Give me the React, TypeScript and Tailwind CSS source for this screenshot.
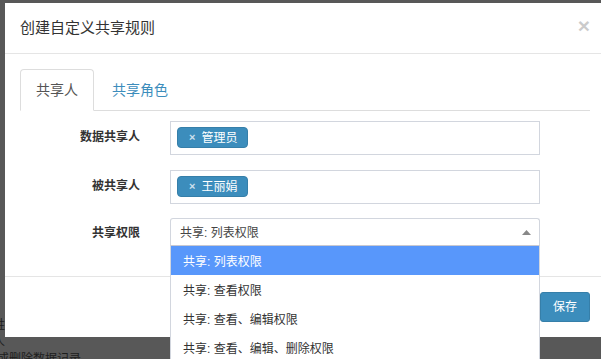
import { useState } from 'react';

const options = ['共享: 列表权限', '共享: 查看权限', '共享: 查看、编辑权限', '共享: 查看、编辑、删除权限'];

function Tag({ label }: { label: string }) {
  return (
    <div className="flex items-center h-[21px] pl-[11px] pr-[10px] bg-[#3c8dbc] border border-[#367fa9] rounded-[4px] text-white text-[12px] leading-[19px]">
      <span className="text-white/75 font-bold text-[11px] mr-[6px]">×</span>
      <span className="pt-px">{label}</span>
    </div>
  );
}

export default function App() {
  const [tab, setTab] = useState(0);
  const [selected, setSelected] = useState(0);

  return (
    <div
      className="relative w-[601px] h-[359px] overflow-hidden bg-[#585858] flex flex-col justify-end"
      style={{ fontFamily: '"Liberation Sans", "Noto Sans CJK SC", sans-serif' }}
    >
      {/* page behind the backdrop */}
      <div className="mb-[-9px] text-[12px] leading-[17px] text-[#1e1e1e]">
        <div className="ml-[-7px]">姓名</div>
        <div className="ml-[-7px]">人</div>
        <div className="ml-[-3px]">或删除数据记录</div>
      </div>

      {/* Modal */}
      <div className="absolute left-[5px] top-[3px] w-[600px] bg-white">
        {/* Header */}
        <div className="flex items-center justify-between px-[15px] py-[15px] border-b border-[#e5e5e5]">
          <h4 className="text-[15px] leading-[20px] text-[#333]">创建自定义共享规则</h4>
          <button className="text-[21px] leading-[20px] font-bold text-black opacity-20 mt-[-4px]">×</button>
        </div>

        {/* Body */}
        <div className="px-[15px] pt-[15px] pb-[30px]">
          <div className="flex border-b border-[#ddd]">
            {['共享人', '共享角色'].map((t, i) => (
              <button
                key={t}
                onClick={() => setTab(i)}
                className={
                  tab === i
                    ? 'mb-[-1px] mr-[2px] px-[15px] py-[10px] text-[14px] leading-[20px] text-[#555] bg-white border border-[#ddd] border-b-white rounded-t-[4px]'
                    : 'mb-[-1px] mr-[2px] px-[15px] py-[10px] text-[14px] leading-[20px] text-[#3c8dbc] border border-transparent'
                }
              >
                {t}
              </button>
            ))}
          </div>

          <div className="pt-[10px]">
            <div className="flex">
              <label className="w-[135px] pr-[15px] pt-[8px] text-right text-[12px] leading-[17px] font-bold text-[#333]">数据共享人</label>
              <div className="ml-[15px] w-[370px] h-[34px] border border-[#d2d6de] pl-[6px] pt-[5px]">
                <div className="flex"><Tag label="管理员" /></div>
              </div>
            </div>

            <div className="flex mt-[15px]">
              <label className="w-[135px] pr-[15px] pt-[8px] text-right text-[12px] leading-[17px] font-bold text-[#333]">被共享人</label>
              <div className="ml-[15px] w-[370px] h-[34px] border border-[#d2d6de] pl-[6px] pt-[5px]">
                <div className="flex"><Tag label="王丽娟" /></div>
              </div>
            </div>

            <div className="flex mt-[14px]">
              <label className="w-[135px] pr-[15px] pt-[7px] text-right text-[12px] leading-[17px] font-bold text-[#333]">共享权限</label>
              <div className="relative ml-[15px] w-[370px]">
                <div className="flex items-center justify-between h-[28px] border border-[#d2d6de] border-b-[#c8c8d0] rounded-t-[3px] pl-[9px] pr-[8px] text-[12px] text-[#444]">
                  <span className="pt-[2px]">{options[selected]}</span>
                  <svg width="9" height="5" viewBox="0 0 9 5" className="mt-[1px]">
                    <path d="M0 5 L4.5 0 L9 5 Z" fill="#888" />
                  </svg>
                </div>
                <div className="absolute left-0 top-full w-full bg-white border-x border-[#d2d6de] z-10">
                  {options.map((o, i) => (
                    <div
                      key={o}
                      onClick={() => setSelected(i)}
                      className={
                        i === selected
                          ? 'h-[29px] flex items-center pl-[12px] pt-[2px] text-[12px] text-white bg-[#5897fb]'
                          : 'h-[29px] flex items-center pl-[12px] pt-[2px] text-[12px] text-[#333]'
                      }
                    >
                      {o}
                    </div>
                  ))}
                </div>
              </div>
            </div>
          </div>
        </div>

        {/* Footer */}
        <div className="flex justify-end p-[15px] border-t border-[#e5e5e5]">
          <button className="h-[30px] px-[12px] bg-[#3c8dbc] border border-[#367fa9] rounded-[3px] text-white text-[12px] leading-[18px]">
            保存
          </button>
        </div>
      </div>
    </div>
  );
}
